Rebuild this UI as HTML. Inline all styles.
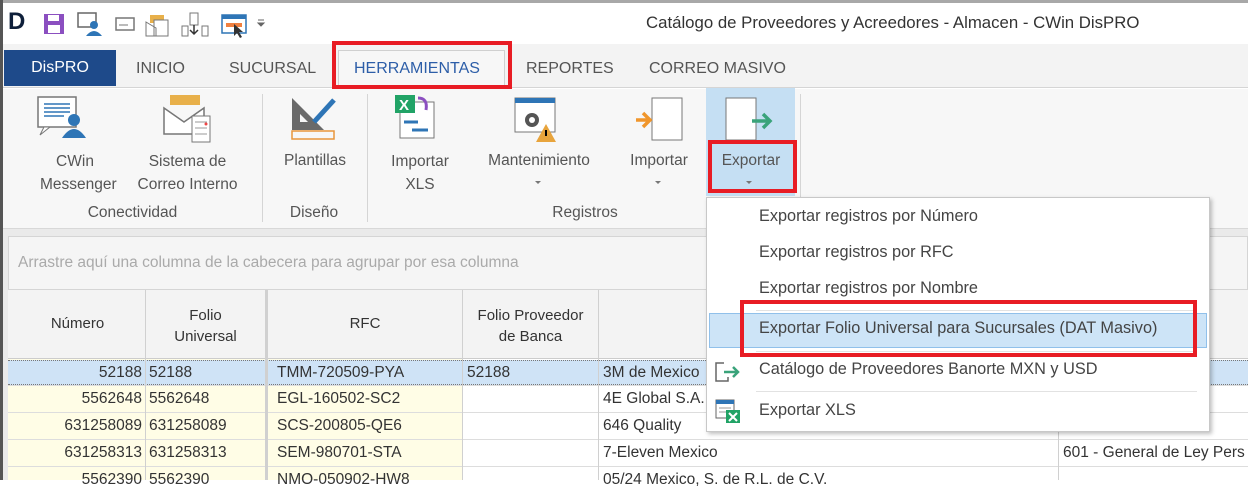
<!DOCTYPE html>
<html><head><meta charset="utf-8"><style>
*{margin:0;padding:0;box-sizing:border-box}
body{width:1248px;height:480px;overflow:hidden;background:#fff;font-family:"Liberation Sans",sans-serif;color:#444;position:relative}
.a{position:absolute;white-space:nowrap}
.t{font-size:15.5px;color:#555}
.m{font-size:16.3px;color:#444}
.c{text-align:center}
.cell{position:absolute;font-size:15.5px;color:#333;white-space:nowrap;line-height:26px;padding:0 3px}
</style></head><body>
<div class="a" style="left:0;top:0;width:1248px;height:3px;background:#a8a8a8"></div>
<div class="a" style="left:0;top:0;width:3px;height:480px;background:#555"></div>
<div class="a" style="left:8px;top:8px;font:bold 24px 'Liberation Sans';color:#0e1f3a">D</div>
<svg class="a" style="left:42px;top:12px" width="230" height="26">
<rect x="2" y="2" width="20" height="20" fill="#8b4fc0"/><rect x="6" y="3" width="11" height="6" fill="#fff"/><rect x="6" y="13" width="12" height="8" fill="#fff"/>
<rect x="36" y="1" width="18" height="14" fill="#fff" stroke="#666" stroke-width="1.5"/><circle cx="52" cy="13" r="4" fill="#2e75b6"/><path d="M44 24 q8 -10 16 0z" fill="#2e75b6"/>
<rect x="74" y="6" width="18" height="12" fill="#fff" stroke="#777" stroke-width="1.5"/><line x1="77" y1="13" x2="86" y2="13" stroke="#777"/>
<rect x="108" y="3" width="14" height="8" fill="#e8b04a"/><rect x="112" y="8" width="14" height="16" fill="#fff" stroke="#777"/><path d="M104 10 l10 6 v8 h-10z" fill="none" stroke="#777"/>
<rect x="148" y="1" width="8" height="12" fill="#fff" stroke="#777"/><rect x="140" y="14" width="6" height="10" fill="#fff" stroke="#777"/><rect x="160" y="14" width="6" height="10" fill="#fff" stroke="#777"/><path d="M152 13 v8 M148 18 l4 4 4 -4" stroke="#333" fill="none" stroke-width="1.5"/>
<rect x="180" y="3" width="24" height="18" fill="#fff" stroke="#2e75b6" stroke-width="1.5"/><rect x="180" y="3" width="24" height="4" fill="#2e75b6"/><rect x="184" y="11" width="16" height="4" fill="#f08040"/><path d="M192 12 l0 12 3 -3 3 5 2 -1 -3 -5 4 0z" fill="#333"/>
<path d="M216 8 h6 M216 11 l3 3 3 -3z" stroke="#666" fill="#666"/>
</svg>
<div class="a" style="left:646px;top:13px;font-size:16.8px;color:#333">Catálogo de Proveedores y Acreedores - Almacen - CWin DisPRO</div>
<div class="a" style="left:3px;top:44px;width:1245px;height:44px;background:#f3f3f3;border-bottom:1px solid #d5d5d5"></div>
<div class="a" style="left:4px;top:50px;width:112px;height:36px;background:#1e4a8a;color:#fff;font-size:16px;line-height:36px;text-align:center">DisPRO</div>
<div class="a t" style="left:136px;top:60px;font-size:16px">INICIO</div>
<div class="a t" style="left:229px;top:60px;font-size:16px">SUCURSAL</div>
<div class="a" style="left:338px;top:50px;width:167px;height:39px;background:#f7f7f7;border:1px solid #d0d0d0;border-bottom:none"></div>
<div class="a" style="left:354px;top:60px;font-size:16px;color:#2d5ea8">HERRAMIENTAS</div>
<div class="a t" style="left:526px;top:60px;font-size:16px">REPORTES</div>
<div class="a t" style="left:649px;top:60px;font-size:16px">CORREO MASIVO</div>
<div class="a" style="left:332px;top:41px;width:180px;height:48px;border:4px solid #e81c24"></div>
<div class="a" style="left:3px;top:89px;width:1245px;height:140px;background:#f7f7f7;border-bottom:1px solid #d8d8d8"></div>
<div class="a" style="left:262px;top:94px;width:1px;height:128px;background:#d5d5d5"></div>
<div class="a" style="left:367px;top:94px;width:1px;height:128px;background:#d5d5d5"></div>
<div class="a" style="left:706px;top:88px;width:89px;height:108px;background:#c5dff3"></div>
<div class="a" style="left:800px;top:94px;width:1px;height:128px;background:#d5d5d5"></div>
<svg class="a" style="left:0;top:90px" width="800" height="60">
<rect x="38" y="7" width="38" height="30" fill="#fff" stroke="#777" stroke-width="1.5"/><path d="M44 14h26M44 18h26M44 22h26M44 26h20" stroke="#2e75b6" stroke-width="1.5"/><path d="M44 37 l-4 8 10 -8z" fill="#fff" stroke="#777"/><circle cx="74" cy="30" r="6" fill="#2e75b6"/><path d="M62 48 q12 -18 24 0z" fill="#2e75b6"/>
<rect x="170" y="5" width="30" height="10" fill="#e8b04a"/><path d="M164 18 l20 14 20 -14 v26 h-40z" fill="#fff" stroke="#777" stroke-width="1.5"/><path d="M164 18 l20 14 20-14" fill="none" stroke="#777"/><rect x="192" y="26" width="18" height="26" fill="#fff" stroke="#777"/><path d="M195 32h12M195 38h12M195 44h12" stroke="#999"/><circle cx="206" cy="34" r="1.5" fill="#e44"/>
<path d="M292 8 v32 h32z" fill="#6a6a6a"/><path d="M300 24 v8 h8z" fill="#f7f7f7"/><path d="M334 10 l-20 22" stroke="#2e75b6" stroke-width="5"/><rect x="292" y="41" width="42" height="8" fill="none" stroke="#e8963c" stroke-width="1.5"/>
<rect x="400" y="12" width="34" height="36" fill="#fff" stroke="#777"/><rect x="395" y="5" width="20" height="18" fill="#21a366"/><text x="399" y="20" font-size="15" font-weight="bold" fill="#fff">X</text><path d="M418 8 q10 0 8 12" stroke="#8b4fc0" stroke-width="3" fill="none"/><path d="M404 32h14M412 40h16" stroke="#2e75b6" stroke-width="3"/>
<rect x="515" y="8" width="40" height="34" fill="#fff" stroke="#777"/><rect x="515" y="8" width="40" height="5" fill="#2e75b6"/><circle cx="532" cy="30" r="7" fill="#555"/><circle cx="532" cy="30" r="3" fill="#fff"/><path d="M546 34 l10 18 h-20z" fill="#e8a43c"/><rect x="545" y="40" width="2" height="6" fill="#000"/>
<rect x="652" y="8" width="30" height="42" fill="#fff" stroke="#777"/><path d="M636 30 h14 M643 23 l7 7 -7 7" stroke="#f0962c" stroke-width="3.5" fill="none"/>
<rect x="726" y="8" width="30" height="42" fill="#fff" stroke="#777"/><path d="M752 31 h18 M763 24 l7 7 -7 7" stroke="#3aa37a" stroke-width="3.5" fill="none"/>
</svg>
<div class="a t c" style="left:40px;top:150px;width:70px;line-height:23px">CWin<br>Messenger</div>
<div class="a t c" style="left:120px;top:150px;width:135px;line-height:23px">Sistema de<br>Correo Interno</div>
<div class="a t c" style="left:270px;top:152px;width:90px">Plantillas</div>
<div class="a t c" style="left:378px;top:150px;width:84px;line-height:23px">Importar<br>XLS</div>
<div class="a t c" style="left:470px;top:152px;width:138px">Mantenimiento</div>
<div class="a t c" style="left:618px;top:152px;width:82px">Importar</div>
<div class="a t c" style="left:708px;top:152px;width:86px">Exportar</div>
<div class="a" style="left:535px;top:181px;border:3px solid transparent;border-top:3px solid #777"></div>
<div class="a" style="left:655px;top:181px;border:3px solid transparent;border-top:3px solid #777"></div>
<div class="a" style="left:746px;top:181px;border:3px solid transparent;border-top:3px solid #777"></div>
<div class="a" style="left:708px;top:140px;width:89px;height:53px;border:4px solid #e81c24"></div>
<div class="a t c" style="left:10px;top:204px;width:245px">Conectividad</div>
<div class="a t c" style="left:264px;top:204px;width:100px">Diseño</div>
<div class="a t c" style="left:370px;top:204px;width:430px">Registros</div>
<div class="a" style="left:3px;top:229px;width:1245px;height:251px;background:#eaeaea"></div>
<div class="a" style="left:8px;top:236px;width:1240px;height:54px;background:#f5f5f5;border:1px solid #d5d5d5"></div>
<div class="a" style="left:18px;top:254px;font-size:15.5px;color:#aaa">Arrastre aquí una columna de la cabecera para agrupar por esa columna</div>
<div class="a" style="left:8px;top:290px;width:1240px;height:69px;background:#f3f3f3;border-bottom:1px solid #ccc"></div>
<div class="a" style="left:8px;top:359px;width:1240px;height:121px;background:#fff"></div>
<div class="a" style="left:8px;top:359px;width:258px;height:121px;background:#fffde6"></div>
<div class="a" style="left:268px;top:359px;width:194px;height:121px;background:#fffde6"></div>
<div class="a" style="left:8px;top:360px;width:1240px;height:25px;background:#cfe3f6;border-top:1px dotted #777;border-bottom:1px dotted #777"></div>
<div class="a" style="left:8px;top:412px;width:1240px;height:1px;background:#ddd"></div>
<div class="a" style="left:8px;top:439px;width:1240px;height:1px;background:#ddd"></div>
<div class="a" style="left:8px;top:466px;width:1240px;height:1px;background:#ddd"></div>
<div class="a" style="left:8px;top:385px;width:1240px;height:1px;background:#ddd"></div>
<div class="a" style="left:145px;top:290px;width:1px;height:190px;background:#d0d0d0"></div>
<div class="a" style="left:265px;top:290px;width:3px;height:190px;background:#d0d0d0"></div>
<div class="a" style="left:462px;top:290px;width:1px;height:190px;background:#d0d0d0"></div>
<div class="a" style="left:598px;top:290px;width:1px;height:190px;background:#d0d0d0"></div>
<div class="a" style="left:1058px;top:290px;width:1px;height:190px;background:#d0d0d0"></div>
<div class="a c" style="left:10px;top:315px;width:135px;font-size:15px;color:#333">Número</div>
<div class="a c" style="left:146px;top:305px;width:119px;font-size:15px;color:#333;line-height:21px">Folio<br>Universal</div>
<div class="a c" style="left:268px;top:315px;width:194px;font-size:15px;color:#333">RFC</div>
<div class="a c" style="left:463px;top:305px;width:135px;font-size:15px;color:#333;line-height:21px">Folio Proveedor<br>de Banca</div>
<div class="cell" style="left:10px;top:360px;width:135px;text-align:right">52188</div><div class="cell" style="left:146px;top:360px">52188</div><div class="cell" style="left:274px;top:360px">TMM-720509-PYA</div><div class="cell" style="left:464px;top:360px">52188</div><div class="cell" style="left:600px;top:360px">3M de Mexico</div>
<div class="cell" style="left:10px;top:386px;width:135px;text-align:right">5562648</div><div class="cell" style="left:146px;top:386px">5562648</div><div class="cell" style="left:274px;top:386px">EGL-160502-SC2</div><div class="cell" style="left:600px;top:386px">4E Global S.A.</div>
<div class="cell" style="left:10px;top:413px;width:135px;text-align:right">631258089</div><div class="cell" style="left:146px;top:413px">631258089</div><div class="cell" style="left:274px;top:413px">SCS-200805-QE6</div><div class="cell" style="left:600px;top:413px">646 Quality</div>
<div class="cell" style="left:10px;top:440px;width:135px;text-align:right">631258313</div><div class="cell" style="left:146px;top:440px">631258313</div><div class="cell" style="left:274px;top:440px">SEM-980701-STA</div><div class="cell" style="left:600px;top:440px">7-Eleven Mexico</div><div class="cell" style="left:1060px;top:440px">601 - General de Ley Pers</div>
<div class="cell" style="left:10px;top:467px;width:135px;text-align:right">5562390</div><div class="cell" style="left:146px;top:467px">5562390</div><div class="cell" style="left:274px;top:467px">NMO-050902-HW8</div><div class="cell" style="left:600px;top:467px">05/24 Mexico, S. de R.L. de C.V.</div>
<div class="a" style="left:706px;top:197px;width:504px;height:235px;background:#fff;border:1px solid #c8c8c8;box-shadow:2px 2px 4px rgba(0,0,0,.25)"></div>
<div class="a m" style="left:759px;top:207px">Exportar registros por Número</div>
<div class="a m" style="left:759px;top:243px">Exportar registros por RFC</div>
<div class="a m" style="left:759px;top:279px">Exportar registros por Nombre</div>
<div class="a" style="left:756px;top:310px;width:441px;height:1px;background:#e2e2e2"></div>
<div class="a" style="left:709px;top:313px;width:498px;height:35px;background:#cde4f7;border:1px solid #90c0ea"></div>
<div class="a m" style="left:759px;top:319px">Exportar Folio Universal para Sucursales (DAT Masivo)</div>
<div class="a" style="left:756px;top:351px;width:441px;height:1px;background:#e2e2e2"></div>
<div class="a m" style="left:759px;top:360px">Catálogo de Proveedores Banorte MXN y USD</div>
<div class="a" style="left:756px;top:391px;width:441px;height:1px;background:#e2e2e2"></div>
<div class="a m" style="left:759px;top:401px">Exportar XLS</div>
<svg class="a" style="left:714px;top:360px" width="28" height="64">
<path d="M10 3 h-8 v18 h12 v-4" fill="none" stroke="#666" stroke-width="1.5"/><path d="M10 12 h14 M19 7 l5 5 -5 5" stroke="#3aa37a" stroke-width="2.5" fill="none"/>
<rect x="2" y="40" width="18" height="18" fill="#fff" stroke="#666"/><rect x="2" y="40" width="18" height="4" fill="#2e75b6"/><path d="M5 48h12M5 52h8" stroke="#999"/><rect x="12" y="50" width="14" height="13" fill="#21a366"/><path d="M15 53 l8 8 M23 53 l-8 8" stroke="#fff" stroke-width="2"/>
</svg>
<div class="a" style="left:740px;top:300px;width:457px;height:57px;border:4px solid #e81c24"></div>
</body></html>
